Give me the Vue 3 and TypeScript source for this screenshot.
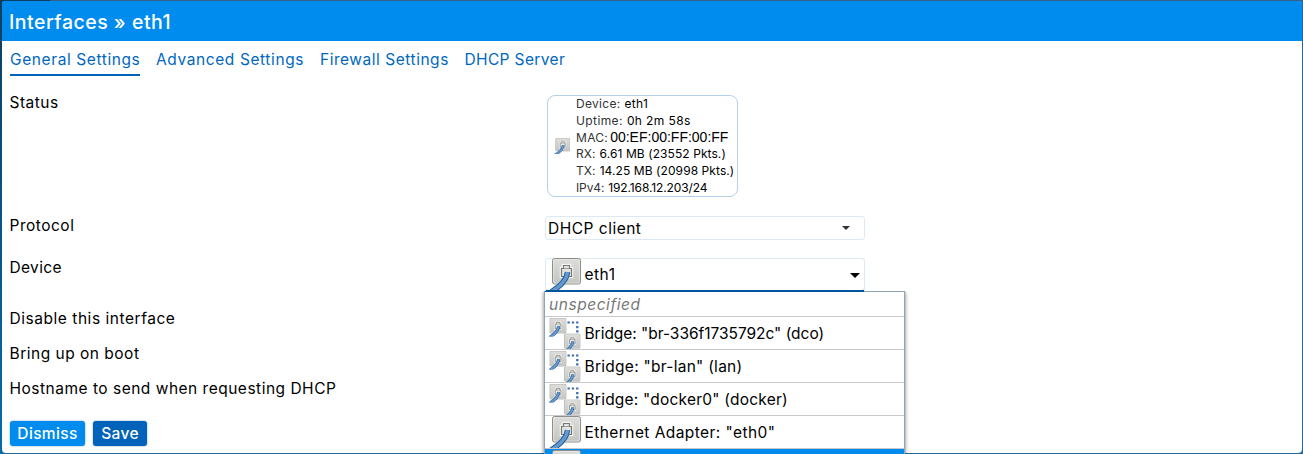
<script setup lang="ts">
interface Choice { kind: 'bridge' | 'port'; label: string; cls: string }
const tabs = [
  { label: 'General Settings', active: true },
  { label: 'Advanced Settings', active: false },
  { label: 'Firewall Settings', active: false },
  { label: 'DHCP Server', active: false },
]
const status = [
  { key: 'Device:', value: 'eth1', cls: 's0' },
  { key: 'Uptime:', value: '0h 2m 58s', cls: 's1' },
  { key: 'MAC:', value: '00:EF:00:FF:00:FF', cls: 'mac' },
  { key: 'RX:', value: '6.61 MB (23552 Pkts.)', cls: 's3' },
  { key: 'TX:', value: '14.25 MB (20998 Pkts.)', cls: 's4' },
  { key: 'IPv4:', value: '192.168.12.203/24', cls: 's5' },
]
const choices: Choice[] = [
  { kind: 'bridge', label: 'Bridge: "br-336f1735792c" (dco)', cls: 'c0' },
  { kind: 'bridge', label: 'Bridge: "br-lan" (lan)', cls: 'c1' },
  { kind: 'bridge', label: 'Bridge: "docker0" (docker)', cls: 'c2' },
  { kind: 'port', label: 'Ethernet Adapter: "eth0"', cls: 'c3' },
]
</script>

<template>
  <div class="backdrop">
    <svg class="defs" aria-hidden="true">
      <defs>
        <linearGradient id="plate" x1="0" y1="0" x2="0" y2="1">
          <stop offset="0" stop-color="#dddedb" /><stop offset="1" stop-color="#c3c5c1" />
        </linearGradient>
        <symbol id="port" viewBox="0 0 32 32">
          <rect x="3.5" y=".5" width="28" height="25.500" rx="2" fill="url(#plate)" stroke="#8c8e89" />
          <rect x="4.500" y="1.500" width="26" height="23.500" rx="1.500" fill="none" stroke="#e8e9e6" stroke-width=".7" />
          <path d="M12.500 18.500V10.500H14.500V7.500H20.500V10.500H22.500V18.500Z" fill="#e8e8e5" stroke="#f4f4f2" stroke-width="3.500" />
          <path d="M12.500 18.500V10.500H14.500V7.500H20.500V10.500H22.500V18.500Z" fill="#e4e5e2" stroke="#777974" stroke-width="1.200" />
          <path d="M14.500 10.500H20.500" stroke="#8b8d88" stroke-width=".8" />
          <path d="M18.500 14C18 21 12 28 2 34" fill="none" stroke="#275f9d" stroke-width="5.400" />
          <path d="M18.500 14C18 21 12 28 2 34" fill="none" stroke="#6499cf" stroke-width="3.500" />
        </symbol>
      </defs>
    </svg>
    <section class="modal">
      <h4>Interfaces » eth1</h4>
      <nav><a v-for="(t, i) in tabs" :key="t.label" :class="['t' + i, { active: t.active }]">{{ t.label }}</a></nav>
      <div class="row status-row">
        <label class="l0">Status</label>
        <div class="badge">
          <svg class="mini"><use href="#port" width="16" height="16" /></svg>
          <div class="facts">
            <div v-for="s in status" :key="s.key" :class="s.cls"><span class="key">{{ s.key }}</span><span class="val">{{ s.value }}</span></div>
          </div>
        </div>
      </div>
      <div class="row protocol-row">
        <label class="l1">Protocol</label>
        <div class="select"><span>DHCP client</span><svg class="caret" viewBox="0 0 8 4"><path d="M0 0H8L4 4Z" /></svg></div>
      </div>
      <div class="row device-row">
        <label class="l2">Device</label>
        <div class="dropdown">
          <svg class="icon"><use href="#port" width="32" height="32" /></svg><span class="chosen">eth1</span>
          <svg class="caret" viewBox="0 0 10 5"><path d="M0 0H10L5 5Z" /></svg>
          <ul class="menu">
            <li class="empty"><em>unspecified</em></li>
            <li v-for="c in choices" :key="c.label">
              <svg v-if="c.kind === 'port'" class="icon"><use href="#port" width="32" height="32" /></svg>
              <svg v-else class="icon">
                <use href="#port" x="-1" y="1" width="18.500" height="18.500" />
                <use href="#port" x="13.500" y="16.500" width="18" height="18" />
                <path d="M18.500 5.500H29.500" fill="none" stroke="#386fa9" stroke-width="2" stroke-dasharray="2.300 2" />
                <path d="M28.300 9V16" fill="none" stroke="#386fa9" stroke-width="2.300" stroke-dasharray="2.200 2" />
              </svg>
              <span :class="c.cls">{{ c.label }}</span>
            </li>
            <li class="selected"><svg class="icon"><use href="#port" width="32" height="32" /></svg></li>
          </ul>
        </div>
      </div>
      <div class="row"><label class="l3">Disable this interface</label></div>
      <div class="row"><label class="l4">Bring up on boot</label></div>
      <div class="row"><label class="l5">Hostname to send when requesting DHCP</label></div>
      <footer><button class="dismiss">Dismiss</button><button class="save">Save</button></footer>
    </section>
  </div>
</template>

<style>
html, body { margin: 0; height: 454px; overflow: hidden; background: #236a9e; }
</style>
<style scoped>
* { box-sizing: border-box; }
.defs { position: absolute; width: 0; height: 0; }
.backdrop { width: 1303px; height: 454px; padding: 1px 1px 1px 2px; overflow: hidden; background: linear-gradient(90deg, #0b3e62 0, #0b3e62 50px, #34628a 50px, #34628a 100%) top / 100% 2px no-repeat, linear-gradient(#0c3e61, #076cab) left / 2px 100% no-repeat, #216b9f; font: 15.5px/20px Inter, "Liberation Sans", sans-serif; letter-spacing: .5px; color: #000; }
.modal { height: 452px; background: #fff; border-radius: 4px; }
h4 { margin: 0; height: 40px; padding: 0 7px; font-size: 19.5px; line-height: 42px; font-weight: 500; color: #fff; background: #008cee; border-radius: 3px 3px 0 0; letter-spacing: .5px; }
nav { display: flex; height: 54px; padding: 8px 8px 0; gap: 16px; }
nav a { height: 27px; line-height: 22px; color: #0067c0; white-space: nowrap; }
nav a.active { border-bottom: 2px solid #0062b8; }
.t0 { width: 130px; letter-spacing: .6px; }
.t1 { width: 148px; letter-spacing: .6px; }
.t2 { width: 128.5px; letter-spacing: .53px; }
.t3 { letter-spacing: .36px; }
.row { display: grid; grid-template-columns: 535px 1fr; height: 35px; padding-left: 8px; align-items: start; }
label { line-height: 18px; white-space: nowrap; justify-self: start; margin-left: -.5px; }
.status-row { height: 121px; }
.status-row label { line-height: 16px; }
.protocol-row { height: 42px; }
.protocol-row label, .device-row label { line-height: 20px; }
.l2 { letter-spacing: .35px; }
.l3 { letter-spacing: .54px; }
.device-row { height: 52px; }
.badge { width: 191px; height: 102px; margin-left: 2px; display: flex; border: 1px solid #b4d0ed; border-radius: 8px; font-size: 12px; line-height: 17px; letter-spacing: .08px; }
.mini { width: 16px; height: 16px; margin: 42px 6px 0 6px; }
.facts { white-space: nowrap; margin-top: -1px; }
.facts > div { height: 16.800px; }
.key { color: #333; margin-right: 4px; }
.s0 { letter-spacing: .3px; }
.s1 { letter-spacing: .4px; }
.s5 { letter-spacing: -.12px; }
.mac .key { margin-right: 2px; letter-spacing: .3px; }
.mac .val { font: 14px/17px "Liberation Sans", sans-serif; letter-spacing: 0; }
.select { display: flex; align-items: center; justify-content: space-between; width: 320px; height: 24px; padding: 2px 14px 0 2px; border: 1px solid #ddeaf6; border-radius: 3px; }
.select .caret { width: 8px; height: 4px; margin-top: -3px; fill: #333; }
.dropdown { position: relative; display: flex; align-items: center; width: 320px; height: 34px; padding: 0 4px 0 3px; border: 1px solid #ddeaf6; border-bottom: 2px solid #00569c; border-radius: 3px; }
.icon { width: 32px; height: 32px; flex: none; margin-right: 3.5px; }
.dropdown > .icon { margin-top: -1px; }
.dropdown > .caret { width: 10px; height: 5px; margin-left: auto; margin-top: 1px; }
.menu { position: absolute; z-index: 2; left: -2px; top: 32px; width: 361px; height: 170px; margin: 0; padding: 0; list-style: none; background: #fff; border: 1px solid #90a4b8; border-top: 0; box-shadow: 0 1px 4px rgba(0, 0, 0, .55); clip-path: inset(0 -6px -6px -6px); }
.menu::before { content: ""; display: block; height: 1px; background: linear-gradient(90deg, #00569c 319px, #90a4b8 319px); }
.menu li { display: flex; align-items: center; height: 33px; padding-left: 4px; border-bottom: 1px solid #c8c8c8; white-space: nowrap; }
.menu li span { padding-top: 2px; }
.menu li.empty { height: 25px; padding-top: 2px; color: #777; letter-spacing: .55px; }
.menu li.selected { background: #008cee; border: 0; }
.c0 { letter-spacing: -.03px; }
.c1 { letter-spacing: .27px; }
.c2 { letter-spacing: .22px; }
.c3 { letter-spacing: .43px; }
footer { display: flex; gap: 8px; padding: 6px 8px; }
button { height: 25px; padding: 0; border: 0; border-radius: 3px; color: #fff; font: 500 15.5px/26px Inter, sans-serif; letter-spacing: .35px; box-shadow: 0 0 2px #6b9bc5; }
.dismiss { width: 75px; background: #008cee; }
.save { width: 54px; background: #0062b8; }
</style>
